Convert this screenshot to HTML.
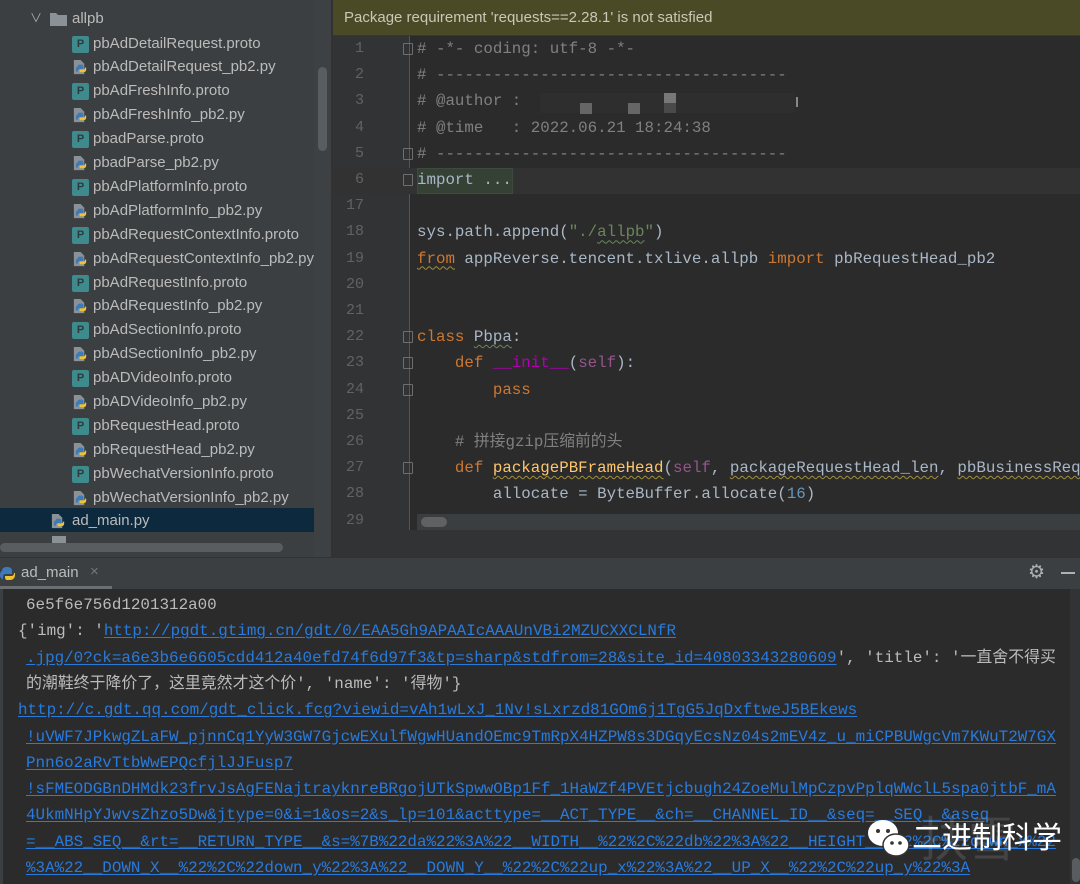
<!DOCTYPE html>
<html><head><meta charset="utf-8">
<style>
*{margin:0;padding:0;box-sizing:border-box}
body{width:1080px;height:884px;overflow:hidden;background:#2b2b2b;position:relative;font-family:"Liberation Sans","Noto Sans CJK SC",sans-serif}
.abs{position:absolute}
#tree{left:0;top:0;width:331px;height:557px;background:#3c3f41}
.row{position:absolute;left:0;height:24px;width:314px;font-size:15px;color:#bbbbbb;line-height:24px;white-space:nowrap}
.ico{position:absolute;top:4px;width:17px;height:17px}
.pr{background:#3f8a8c;border-radius:2px;color:#2b3b3d;font-size:11px;line-height:17px;text-align:center;font-weight:bold}
.mono{font-family:"Liberation Mono","Noto Sans CJK SC",monospace}
#ed{left:333px;top:36px;width:747px;height:494px;background:#2b2b2b}
#gut{left:333px;top:36px;width:77px;height:494px;background:#313335;border-right:1px solid #555}
.ln{position:absolute;left:333px;width:31px;text-align:right;color:#606366;font-size:15px;height:26px;line-height:26px}
.cl{position:absolute;left:417px;font-size:15.8px;color:#a9b7c6;white-space:pre;height:26px;line-height:26px}
.k{color:#cc7832}.c{color:#808080}.s{color:#6a8759}.p{color:#94558d}.n{color:#6897bb}.f{color:#ffc66d}.m{color:#b200b2}
.w{text-decoration:underline wavy #6a8759;text-decoration-thickness:1px;text-underline-offset:3px}
.wy{text-decoration:underline wavy #a08f3d;text-decoration-thickness:1px;text-underline-offset:3px}
.fold{position:absolute;left:403px;width:10px;height:12px;border:1px solid #6e6e6e;border-radius:1px}
.con{position:absolute;font-size:15.9px;color:#bbbbbb;white-space:pre;height:26px;line-height:26px}
.a{color:#287bde;text-decoration:underline;text-underline-offset:2px}
</style></head><body>
<div id="tree" class="abs"></div>
<div class="abs" style="left:314px;top:0;width:17px;height:557px;background:#3e4143"></div>
<div class="abs" style="left:318px;top:67px;width:9px;height:84px;background:#5a5d5f;border-radius:5px"></div>
<div class="abs" style="left:0;top:543px;width:283px;height:9px;background:#5a5d5f;border-radius:5px"></div>
<div class="row" style="top:7px"><span class="abs" style="left:30px;top:-1px;color:#aaa;font-size:12px">&#x2228;</span>
<svg class="abs" style="left:50px;top:5px" width="17" height="14"><path d="M0 1h6l2 2h9v11H0z" fill="#8b9297"/></svg>
<span class="abs" style="left:72px">allpb</span></div>
<div id="files"></div>
<div class="abs" style="left:0;top:508px;width:314px;height:24px;background:#0d293e"></div>
<div class="row" style="top:509px">
<svg class="ico" style="left:50px" width="18" height="18" viewBox="0 0 18 18"><path d="M2 1h7l4 4v11H2z" fill="#8b9297"/><path d="M6 8c0-2 1-2 3-2s3 0 3 2v3H8c-1 0-2 1-2 2v1c-1 0-2-1-2-3s1-3 2-3z" fill="#3d7ab8"/><path d="M15 11c0 2-1 3-3 3H9c-1 0-1-1-1-2v-1h4c1 0 2-1 2-2h1z" fill="#f0c330"/></svg>
<span class="abs" style="left:72px">ad_main.py</span></div>
<div class="row" style="top:532px;height:11px;overflow:hidden"><span class="abs" style="left:52px;top:4px;width:14px;height:10px;background:#8b9297"></span></div>

<div class="abs" style="left:331px;top:0;width:2px;height:557px;background:#323232"></div>
<div class="abs" style="left:333px;top:0;width:747px;height:36px;background:#4b4a27;border-bottom:1px solid #3a3a22;color:#c8c8b8;font-size:15px;line-height:36px;padding-left:11px">Package requirement 'requests==2.28.1' is not satisfied</div>
<div id="ed" class="abs"></div>
<div id="gut" class="abs"></div>
<div class="abs" style="left:333px;top:168px;width:747px;height:26px;background:#323232"></div>
<div class="abs" style="left:417px;top:168px;width:96px;height:26px;background:#354135;border:1px solid #3d4a3e"></div>
<div id="code"></div>
<div class="abs" style="left:417px;top:514px;width:663px;height:16px;background:#3b3e40"></div>
<div class="abs" style="left:421px;top:517px;width:26px;height:10px;background:#5f6163;border-radius:5px"></div>
<div class="abs" style="left:333px;top:530px;width:747px;height:27px;background:#313335"></div>
<div class="abs" style="left:540px;top:93px;width:255px;height:20px;background:#2e2e2e"></div>
<div class="abs" style="left:580px;top:103px;width:12px;height:11px;background:#666"></div>
<div class="abs" style="left:628px;top:103px;width:12px;height:11px;background:#666"></div>
<div class="abs" style="left:664px;top:93px;width:12px;height:10px;background:#777"></div>
<div class="abs" style="left:664px;top:103px;width:12px;height:10px;background:#4a4a4a"></div>
<div class="abs" style="left:796px;top:97px;width:2px;height:10px;background:#888"></div>
<div class="abs" style="left:0;top:557px;width:1080px;height:32px;background:#3c3f41;border-top:1px solid #323232"></div>
<svg class="abs" style="left:0;top:564px" width="16" height="18" viewBox="0 0 16 18"><path d="M2 7c0-3 2-4 5-4s5 1 5 4v3H6c-2 0-3 1-3 3v2c-2 0-3-2-3-4s1-4 2-4z" fill="#3d7ab8"/><path d="M15 11c0 3-2 5-5 5H7c-1 0-2-1-2-3v-1h6c2 0 3-1 3-3h1z" fill="#f0c330"/></svg>
<div class="abs" style="left:21px;top:564px;color:#bbb;font-size:15px">ad_main</div>
<div class="abs" style="left:90px;top:563px;color:#777;font-size:15px">×</div>
<div class="abs" style="left:0;top:586px;width:112px;height:3px;background:#6c6f71"></div>
<div class="abs" style="left:1028px;top:561px;color:#afb1b3;font-size:19px">⚙</div>
<div class="abs" style="left:1061px;top:572px;width:14px;height:2px;background:#afb1b3"></div>
<div class="abs" style="left:0;top:589px;width:3px;height:295px;background:#3c3f41"></div>
<div class="abs" style="left:1070px;top:589px;width:10px;height:295px;background:#313335"></div>
<div class="abs" style="left:1072px;top:858px;width:8px;height:24px;background:#5a5d5f;border-radius:4px"></div>
<div id="con"></div>
<div class="abs" style="left:920px;top:800px;font-size:48px;color:rgba(255,255,255,0.12)">扶雪</div>
<svg class="abs" style="left:866px;top:818px" width="46" height="42" viewBox="0 0 46 42"><ellipse cx="17" cy="15" rx="15" ry="13" fill="#fff"/><circle cx="12" cy="13" r="2" fill="#333"/><circle cx="22" cy="13" r="2" fill="#333"/><ellipse cx="30" cy="27" rx="13" ry="11" fill="#fff" stroke="#333" stroke-width="1.5"/><circle cx="26" cy="25" r="1.8" fill="#333"/><circle cx="34" cy="25" r="1.8" fill="#333"/></svg>
<div class="abs" style="left:912px;top:818px;font-size:30px;color:#fff;font-family:'Noto Sans CJK SC',sans-serif;line-height:34px">二进制科学</div>

<script>
var files=[["pbAdDetailRequest.proto",0],["pbAdDetailRequest_pb2.py",1],["pbAdFreshInfo.proto",0],["pbAdFreshInfo_pb2.py",1],["pbadParse.proto",0],["pbadParse_pb2.py",1],["pbAdPlatformInfo.proto",0],["pbAdPlatformInfo_pb2.py",1],["pbAdRequestContextInfo.proto",0],["pbAdRequestContextInfo_pb2.py",1],["pbAdRequestInfo.proto",0],["pbAdRequestInfo_pb2.py",1],["pbAdSectionInfo.proto",0],["pbAdSectionInfo_pb2.py",1],["pbADVideoInfo.proto",0],["pbADVideoInfo_pb2.py",1],["pbRequestHead.proto",0],["pbRequestHead_pb2.py",1],["pbWechatVersionInfo.proto",0],["pbWechatVersionInfo_pb2.py",1]];
var py='<svg class="ico" style="left:72px" width="18" height="18" viewBox="0 0 18 18"><path d="M2 1h7l4 4v11H2z" fill="#8b9297"/><path d="M6 8c0-2 1-2 3-2s3 0 3 2v3H8c-1 0-2 1-2 2v1c-1 0-2-1-2-3s1-3 2-3z" fill="#3d7ab8"/><path d="M15 11c0 2-1 3-3 3H9c-1 0-1-1-1-2v-1h4c1 0 2-1 2-2h1z" fill="#f0c330"/></svg>';
var h='';files.forEach(function(f,i){var t=31.5+i*23.9;h+='<div class="row" style="top:'+t+'px;overflow:hidden">'+(f[1]?py:'<div class="ico pr" style="left:72px">P</div>')+'<span class="abs" style="left:93px">'+f[0]+'</span></div>';});
document.getElementById('files').innerHTML=h;
var lines=[["1",'# -*- coding: utf-8 -*-',1],["2",'<span class="c"># -------------------------------------</span>'],["3",'<span class="c"># @author :</span>'],["4",'<span class="c"># @time   : 2022.06.21 18:24:38</span>'],["5",'<span class="c"># -------------------------------------</span>',2],["6",'import ...',3],["17",''],["18",'sys.path.append(<span class="s">"./<span class="w">allpb</span>"</span>)'],["19",'<span class="k wy">from</span> appReverse.tencent.txlive.allpb <span class="k">import</span> pbRequestHead_pb2'],["20",''],["21",''],["22",'<span class="k">class</span> <span class="w">Pbpa</span>:',1],["23",'    <span class="k">def</span> <span class="m">__init__</span>(<span class="p">self</span>):',1],["24",'        <span class="k">pass</span>',2],["25",''],["26",'    <span class="c"># 拼接gzip压缩前的头</span>'],["27",'    <span class="k">def</span> <span class="f wy">packagePBFrameHead</span>(<span class="p">self</span>, <span class="wy">packageRequestHead_len</span>, <span class="wy">pbBusinessRequest</span>',1],["28",'        allocate = ByteBuffer.allocate(<span class="n">16</span>)'],["29",'']];
h='';lines.forEach(function(l,i){var t=36+i*26.2;var txt=l[1];if(i==0)txt='<span class="c">'+txt+'</span>';h+='<div class="ln mono" style="top:'+t+'px">'+l[0]+'</div><div class="cl mono" style="top:'+t+'px">'+txt+'</div>';if(l[2])h+='<div class="fold" style="top:'+(t+7)+'px"></div>';});
document.getElementById('code').innerHTML=h;
var con=[[26,'6e5f6e756d1201312a00'],[18,"{'img': '<span class='a'>http://pgdt.gtimg.cn/gdt/0/EAA5Gh9APAAIcAAAUnVBi2MZUCXXCLNfR</span>"],[26,"<span class='a'>.jpg/0?ck=a6e3b6e6605cdd412a40efd74f6d97f3&tp=sharp&stdfrom=28&site_id=40803343280609</span>', 'title': '一直舍不得买"],[26,"的潮鞋终于降价了，这里竟然才这个价', 'name': '得物'}"],[18,"<span class='a'>http://c.gdt.qq.com/gdt_click.fcg?viewid=vAh1wLxJ_1Nv!sLxrzd81GOm6j1TgG5JqDxftweJ5BEkews</span>"],[26,"<span class='a'>!uVWF7JPkwgZLaFW_pjnnCq1YyW3GW7GjcwEXulfWgwHUandOEmc9TmRpX4HZPW8s3DGqyEcsNz04s2mEV4z_u_miCPBUWgcVm7KWuT2W7GX</span>"],[26,"<span class='a'>Pnn6o2aRvTtbWwEPQcfjlJJFusp7</span>"],[26,"<span class='a'>!sFMEODGBnDHMdk23frvJsAgFENajtrayknreBRgojUTkSpwwOBp1Ff_1HaWZf4PVEtjcbugh24ZoeMulMpCzpvPplqWWclL5spa0jtbF_mA</span>"],[26,"<span class='a'>4UkmNHpYJwvsZhzo5Dw&jtype=0&i=1&os=2&s_lp=101&acttype=__ACT_TYPE__&ch=__CHANNEL_ID__&seq=__SEQ__&aseq</span>"],[26,"<span class='a'>=__ABS_SEQ__&rt=__RETURN_TYPE__&s=%7B%22da%22%3A%22__WIDTH__%22%2C%22db%22%3A%22__HEIGHT__%22%2C%22down_x%22</span>"],[26,"<span class='a'>%3A%22__DOWN_X__%22%2C%22down_y%22%3A%22__DOWN_Y__%22%2C%22up_x%22%3A%22__UP_X__%22%2C%22up_y%22%3A</span>"]];
h='';con.forEach(function(c,i){var t=592+i*26.3;h+='<div class="con mono" style="left:'+c[0]+'px;top:'+t+'px">'+c[1]+'</div>';});
document.getElementById('con').innerHTML=h;
</script>
</body></html>
